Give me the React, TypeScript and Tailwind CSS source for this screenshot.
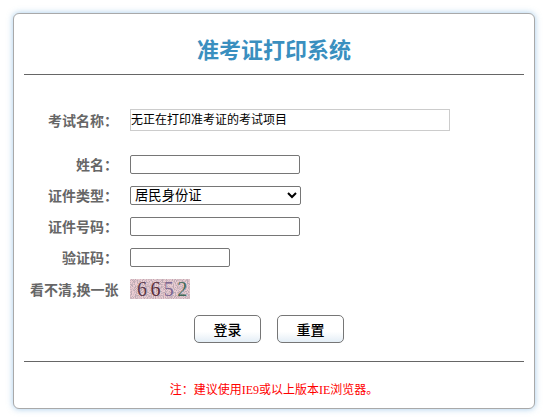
const cjk = "font-['Noto_Sans_CJK_SC','Noto_Sans',sans-serif]";

function Row({ label, className, children }: { label: string; className: string; children: React.ReactNode }) {
  return (
    <div className={`flex items-center ${className}`}>
      <label className="w-[94px] text-right text-[14px] font-bold leading-[19px] text-[#666] whitespace-nowrap">{label}</label>
      <div className="ml-[12px] flex">{children}</div>
    </div>
  );
}

const inputCls = "h-[19px] rounded-[2px] border border-[#767676] bg-white outline-none";

function Captcha() {
  return (
    <div className="relative h-[20px] w-[60px] overflow-hidden bg-[#eccdd3]">
      <svg className="absolute inset-0" width="60" height="20" aria-hidden="true">
        <filter id="noise" x="0" y="0" width="100%" height="100%">
          <feTurbulence type="fractalNoise" baseFrequency="0.9" numOctaves="1" seed="4" />
          <feColorMatrix values="0 0 0 0 0.5  0 0 0 0 0.4  0 0 0 0 0.45  0 0 0 5 -2.1" />
        </filter>
        <rect width="60" height="20" filter="url(#noise)" />
      </svg>
      <div className="relative flex pl-[7px] font-['Liberation_Serif',serif] text-[20px] leading-[20px] tracking-[3.4px]">
        <span className="text-[#5a3a4c]">6</span>
        <span className="text-[#5b2f3c]">6</span>
        <span className="text-[#7d6690]">5</span>
        <span className="text-[#3f6a58]">2</span>
      </div>
    </div>
  );
}

export default function App() {
  return (
    <div className={`h-[419px] w-[544px] overflow-hidden bg-white pl-[13px] pt-[13px] ${cjk}`}>
      <div className="h-[396px] w-[522px] rounded-[6px] border border-[#a9a9a9] bg-white px-[10px] shadow-[0_0_6px_rgba(90,160,215,0.55)]">
        <h1 className="pt-[18px] text-center text-[22px] font-bold leading-[32px] text-[#3a8fbf]">准考证打印系统</h1>
        <hr className="mt-[10px] border-0 border-t border-[#666]" />

        <Row label="考试名称：" className="mt-[34px] h-[22px]">
          <input
            readOnly
            value="无正在打印准考证的考试项目"
            className="h-[22px] w-[320px] border border-[#ccc] bg-white pb-[3px] font-['Liberation_Sans','Noto_Sans_CJK_SC',sans-serif] text-[12px] text-black outline-none"
          />
        </Row>
        <Row label="姓名：" className="mt-[24px] h-[19px]">
          <input className={`${inputCls} w-[170px]`} />
        </Row>
        <Row label="证件类型：" className="mt-[12px] h-[19px]">
          <select className={`${inputCls} w-[171px] font-['Liberation_Sans','Noto_Sans_CJK_SC',sans-serif] text-[13.33px] text-black`} defaultValue="居民身份证">
            <option>居民身份证</option>
          </select>
        </Row>
        <Row label="证件号码：" className="mt-[12px] h-[19px]">
          <input className={`${inputCls} w-[170px]`} />
        </Row>
        <Row label="验证码：" className="mt-[12px] h-[19px]">
          <input className={`${inputCls} w-[100px]`} />
        </Row>
        <div className="mt-[12px] flex h-[20px] items-center">
          <span className="ml-[6px] w-[90px] text-[14px] font-bold leading-[19px] text-[#666] whitespace-nowrap">看不清,换一张</span>
          <div className="ml-[10px]"><Captcha /></div>
        </div>
        <div className="mt-[16px] flex h-[28px] pl-[170px]">
          <button className="h-[28px] w-[67px] rounded-[5px] border border-[#767676] bg-gradient-to-b from-white from-60% to-[#e4eef6] text-[14px] font-medium text-black">登录</button>
          <button className="ml-[16px] h-[28px] w-[67px] rounded-[5px] border border-[#767676] bg-gradient-to-b from-white from-60% to-[#e4eef6] text-[14px] font-medium text-black">重置</button>
        </div>
        <hr className="mt-[18px] border-0 border-t border-[#666]" />
        <p className="mt-[19px] text-center text-[12px] leading-[16px] text-[#f00]">
          注：建议使用<span className="font-['Liberation_Serif',serif]">IE9</span>或以上版本<span className="font-['Liberation_Serif',serif]">IE</span>浏览器。
        </p>
      </div>
    </div>
  );
}
